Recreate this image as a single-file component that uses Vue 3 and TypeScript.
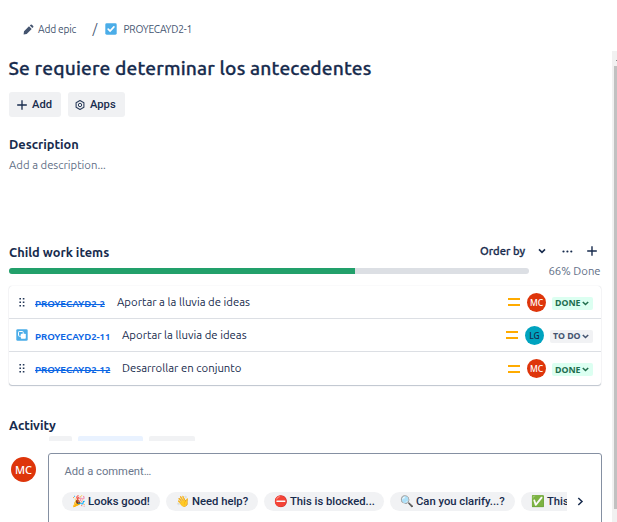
<script setup lang="ts">
interface WorkItem {
  key: string
  title: string
  done: boolean
  subtask: boolean
  initials: string
}

const items: WorkItem[] = [
  { key: 'PROYECAYD2-2', title: 'Aportar a la lluvia de ideas', done: true, subtask: false, initials: 'MC' },
  { key: 'PROYECAYD2-11', title: 'Aportar la lluvia de ideas', done: false, subtask: true, initials: 'LG' },
  { key: 'PROYECAYD2-12', title: 'Desarrollar en conjunto', done: true, subtask: false, initials: 'MC' },
]

const replies = [
  { emoji: '🎉', text: 'Looks good!', cls: 'looks' },
  { emoji: '👋', text: 'Need help?', cls: 'help' },
  { emoji: '⛔', text: 'This is blocked...', cls: 'blocked' },
  { emoji: '🔍', text: 'Can you clarify...?', cls: 'clarify' },
  { emoji: '✅', text: 'This', cls: 'finished' },
]
</script>

<template>
  <div class="page">
    <nav class="crumbs">
      <svg class="pencil" width="11" height="11" viewBox="0 0 11 11">
        <path d="M1 7.2 6 2.2 8.7 4.9 3.7 9.9 .6 10.4Z M6.8 1.5 7.7.7Q8.3.2 8.9.8L10.2 2.1Q10.7 2.7 10.2 3.3L9.4 4.1Z" fill="#44546f" />
      </svg>
      <span class="epic"><span>Add epic</span></span>
      <span class="slash">/</span>
      <svg class="task" width="12" height="12" viewBox="0 0 12 12">
        <rect x=".3" y=".3" width="11.4" height="11.4" rx="1.4" fill="#4bade8" />
        <path d="M3.2 6.1 5.1 8.1 8.9 3.9" fill="none" stroke="#fff" stroke-width="1.7" stroke-linecap="round" />
      </svg>
      <span class="crumb-key">PROYECAYD2-1</span>
    </nav>

    <div class="body">
      <main class="content">
        <h1><span>Se requiere determinar los antecedentes</span></h1>
        <div class="actions">
          <button class="btn add">
            <svg width="10" height="10" viewBox="0 0 10 10"><path d="M5 .2V9.8M.2 5H9.8" stroke="#172b4d" stroke-width="1.3" /></svg>
            <span>Add</span>
          </button>
          <button class="btn apps">
            <svg width="10" height="10" viewBox="0 0 10 10" fill="none" stroke="#2c3e5d">
              <path d="M5 .5 8.9 2.7V7.3L5 9.5 1.1 7.3V2.7Z" stroke-width="1.1" stroke-linejoin="round" />
              <circle cx="5" cy="5" r="1.7" stroke-width="1" />
            </svg>
            <span>Apps</span>
          </button>
        </div>

        <h2 class="h-desc">Description</h2>
        <p class="placeholder">Add a description...</p>

        <div class="child-head">
          <h2 class="h-child">Child work items</h2>
          <span class="order">Order by</span>
          <svg class="order-chev" width="8" height="6" viewBox="0 0 8 6"><path d="M1 1.4 4 4.3 7 1.4" fill="none" stroke="#172b4d" stroke-width="1.6" /></svg>
          <svg class="more" width="11" height="3" viewBox="0 0 11 3" fill="#172b4d"><circle cx="1.5" cy="1.5" r="1.1" /><circle cx="5.4" cy="1.5" r="1.1" /><circle cx="9.3" cy="1.5" r="1.1" /></svg>
          <svg class="plus" width="10" height="10" viewBox="0 0 10 10"><path d="M5 .2V9.8M.2 5H9.8" stroke="#172b4d" stroke-width="1.4" /></svg>
        </div>
        <div class="progress-row">
          <div class="track"><div class="fill"></div></div>
          <span class="percent">66% Done</span>
        </div>

        <div class="list">
          <div v-for="item in items" :key="item.key" class="item" :class="{ closed: item.done }">
            <span class="lead">
              <svg v-if="item.subtask" width="12" height="12" viewBox="0 0 12 12">
                <rect x=".3" y=".3" width="11.4" height="11.4" rx="1.3" fill="#4bade8" />
                <rect x="2.5" y="2.5" width="4.7" height="4.7" rx=".7" fill="none" stroke="#fff" />
                <rect x="4.8" y="4.8" width="5" height="5" rx=".8" fill="#fff" />
              </svg>
              <svg v-else width="6" height="9" viewBox="0 0 6 9" fill="#253858">
                <path d="M.4 0H2V1.6H.4ZM3.8 0H5.4V1.6H3.8ZM.4 3.5H2V5.1H.4ZM3.8 3.5H5.4V5.1H3.8ZM.4 7H2V8.6H.4ZM3.8 7H5.4V8.6H3.8Z" />
              </svg>
            </span>
            <span class="key" :class="{ short: item.key.length < 13 }">{{ item.key }}</span>
            <span class="title">{{ item.title }}</span>
            <span class="priority"></span>
            <span class="avatar" :class="{ teal: item.initials === 'LG' }">{{ item.initials }}</span>
            <span class="status">
              <span>{{ item.done ? 'DONE' : 'TO DO' }}</span>
              <svg width="7" height="5" viewBox="0 0 7 5"><path d="M.8 1 3.5 3.5 6.2 1" fill="none" stroke="currentColor" stroke-width="1.6" /></svg>
            </span>
          </div>
        </div>

        <h2 class="h-activity">Activity</h2>
        <div class="tabs"><i></i><i class="selected"></i><i></i></div>

        <div class="comment-row">
          <span class="avatar big">MC</span>
          <div class="editor">
            <div class="comment-hint">Add a comment…</div>
            <div class="reply-row">
              <div class="replies">
                <span v-for="r in replies" :key="r.text" class="chip" :class="r.cls">
                  <span class="emoji">{{ r.emoji }}</span><span class="chip-text">{{ r.text }}</span>
                </span>
              </div>
              <svg class="next" width="7" height="9" viewBox="0 0 7 9"><path d="M1.3 1 5 4.5 1.3 8" fill="none" stroke="#172b4d" stroke-width="1.5" /></svg>
            </div>
          </div>
        </div>
      </main>
      <aside class="scrollbar"><div class="arrow"></div><div class="thumb"></div></aside>
    </div>
  </div>
</template>

<style>
body { background: #fff; overflow: hidden; }
</style>

<style scoped>
.page { width: 617px; height: 522px; overflow: hidden; font-family: Ubuntu, "Noto Sans", sans-serif; color: #172b4d; background: #fff; white-space: nowrap; }
svg { display: block; flex: none; }
.crumbs { height: 51px; padding: 7px 0 0 23px; box-sizing: border-box; display: flex; align-items: center; font-size: 10.2px; color: #44546f; }
.epic { width: 54.5px; margin-left: 4px; letter-spacing: -.2px; }
.slash { width: 12px; font-size: 13px; }
.crumb-key { margin-left: 7px; letter-spacing: -.25px; }
.body { display: flex; height: 471px; }
.content { width: 612px; padding-left: 9px; box-sizing: border-box; flex: none; }
h1 { margin: 0 0 0 -.5px; height: 41px; line-height: 34px; font-size: 19.2px; font-weight: 500; letter-spacing: .15px; -webkit-text-stroke: .3px #172b4d; }
.actions { display: flex; gap: 7px; height: 25px; }
.btn { display: flex; align-items: center; border: 0; border-radius: 3px; background: #f0f1f3; color: #172b4d; padding: 0 0 0 8px; font: 500 11.2px/25px Roboto, sans-serif; }
.btn span { margin-left: 5px; }
.btn.apps { padding-left: 7px; }
.add { width: 52px; }
.apps { width: 57px; }
h2 { margin: 0; font-size: 12.8px; line-height: 18px; font-weight: 700; }
.h-desc { margin-top: 18px; }
.placeholder { margin: 3px 0 0; height: 17px; line-height: 17px; font-size: 11.3px; color: #626f86; }
.child-head { height: 20px; margin-top: 68px; display: flex; align-items: center; }
.h-child { width: 471px; padding-top: 2px; }
.order { width: 58px; font-size: 11.2px; font-weight: 500; -webkit-text-stroke: .3px #172b4d; }
.more { margin-left: 16px; }
.plus { margin-left: 13.5px; }
.progress-row { height: 18px; margin-top: 1px; display: flex; align-items: center; }
.track { width: 520px; height: 6px; border-radius: 3px; background: #dcdfe4; overflow: hidden; }
.fill { width: 346px; height: 6px; background: #22a06b; }
.percent { margin-left: 19.5px; line-height: 14px; font-size: 11.3px; color: #626f86; }
.list { width: 592px; height: 99px; margin-top: 6px; border-radius: 3px; box-shadow: 0 1px 1px #091e4240, 0 0 1px #091e4238; }
.item { height: 33px; display: flex; align-items: center; box-sizing: border-box; border-bottom: 1px solid #dcdfe4; }
.item:last-child { border-bottom: 0; }
.lead { width: 26px; display: flex; justify-content: center; }
.key { width: 87px; padding-top: 2px; font-size: 9.6px; font-weight: 600; letter-spacing: -.05px; color: #0c66e4; }
.key.short { width: 82px; }
.closed .key { text-decoration: line-through; }
.title { flex: 1; font-size: 11.35px; line-height: 13px; padding-bottom: 1px; }
.item:last-child .title { padding-bottom: 2px; }
.priority { width: 12px; height: 8px; border: solid #ffab00; border-width: 2px 0; box-sizing: border-box; margin-right: 7px; }
.avatar { width: 19px; height: 19px; border-radius: 50%; background: #de350b; color: #fff; display: flex; align-items: center; justify-content: center; font: 500 8.5px "Noto Sans", sans-serif; }
.teal { background: #00a3bf; color: #172b4d; }
.status { height: 13px; width: 41px; margin: 2px 8px 0 6px; padding: 0 4px 0 3px; box-sizing: border-box; border-radius: 2px; display: flex; align-items: center; justify-content: space-between; font: 700 8.8px "Noto Sans", sans-serif; background: #dcfff1; color: #216e4e; }
.item:not(.closed) .status { width: 43px; background: #f1f2f4; color: #44546f; }
.h-activity { margin-top: 31px; }
.tabs { height: 5px; margin-top: 2px; padding-left: 40px; display: flex; gap: 6px; }
.tabs i { width: 23px; background: #f1f2f4; border-radius: 2px 2px 0 0; }
.tabs .selected { width: 65px; background: #e9f2ff; }
.tabs i:last-child { width: 46px; }
.comment-row { display: flex; margin-top: 12px; height: 90px; }
.big { width: 25px; height: 25px; margin: 4px 12px 0 2px; font-size: 11px; }
.editor { width: 554px; height: 100px; box-sizing: border-box; border: 1px solid #8590a2; border-radius: 3px 3px 0 0; padding-left: 13px; }
.comment-hint { margin: 9px 0 0 2.5px; height: 18px; font: 11.2px/18px Roboto, sans-serif; color: #6b778c; }
.reply-row { display: flex; align-items: center; margin-top: 11px; }
.replies { width: 505px; height: 19px; display: flex; gap: 6px; overflow: hidden; }
.chip { display: flex; align-items: center; height: 19px; padding-left: 10px; flex: none; border-radius: 10px; background: #f1f2f4; box-sizing: border-box; font: 500 11.25px/19px Roboto, sans-serif; }
.emoji { width: 16px; font-size: 11px; font-family: "Noto Color Emoji", sans-serif; flex: none; }
.looks { width: 98px; }
.help { width: 92px; }
.blocked { width: 120px; }
.clarify { width: 125px; }
.finished { width: 110px; }
.next { margin-left: 10px; }
.scrollbar { width: 5px; background: #f1f1f1; padding-left: 2px; box-sizing: border-box; }
.arrow { height: 10px; width: 1px; margin: 0 0 5px 2px; background: linear-gradient(#f1f1f1 9px, #8b8b8b 9px); }
.thumb { height: 443px; background: #c1c1c1; }
</style>
